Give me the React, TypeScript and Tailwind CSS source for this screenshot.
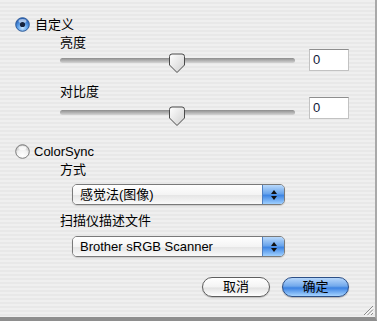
import React from "react";

const cjk = "font-['Liberation_Sans','Noto_Sans_CJK_SC',sans-serif]";

function Radio({ checked }: { checked: boolean }) {
  return (
    <svg width="15" height="15" viewBox="0 0 15 15" className="shrink-0">
      <defs>
        <radialGradient id="rb" cx="50%" cy="75%" r="65%">
          <stop offset="0%" stopColor="#c9e6ff" />
          <stop offset="55%" stopColor="#5a9ee8" />
          <stop offset="100%" stopColor="#2a63b8" />
        </radialGradient>
        <radialGradient id="rw" cx="50%" cy="80%" r="70%">
          <stop offset="0%" stopColor="#ffffff" />
          <stop offset="60%" stopColor="#f2f2f2" />
          <stop offset="100%" stopColor="#c4c4c4" />
        </radialGradient>
      </defs>
      <circle
        cx="7.5"
        cy="7.5"
        r="6.8"
        fill={checked ? "url(#rb)" : "url(#rw)"}
        stroke={checked ? "#2f5c9a" : "#7d7d7d"}
        strokeWidth="1"
      />
      <ellipse cx="7.5" cy="4" rx="4" ry="2" fill="#ffffff" opacity={checked ? 0.55 : 0.8} />
      {checked && <circle cx="7.5" cy="7.5" r="2.6" fill="#15233d" />}
    </svg>
  );
}

function Thumb() {
  return (
    <svg width="18" height="21" viewBox="0 0 18 21">
      <defs>
        <linearGradient id="tg" x1="0" y1="0" x2="1" y2="1">
          <stop offset="0%" stopColor="#ffffff" />
          <stop offset="100%" stopColor="#cfcfcf" />
        </linearGradient>
      </defs>
      <path
        d="M1.5 3.5 Q1.5 1 4 1 H14 Q16.5 1 16.5 3.5 V12 L9 19.5 L1.5 12 Z"
        fill="url(#tg)"
        stroke="#4a4a4a"
        strokeWidth="1"
      />
    </svg>
  );
}

function SliderRow({ trackTop, thumbTop }: { trackTop: string; thumbTop: string }) {
  return (
    <div className="flex items-start h-[22px]">
      <div className="relative w-[235px] h-[22px]">
        <div
          className={`${trackTop} h-[5px] rounded-full bg-[linear-gradient(#8c8c8c,#b8b8b8_60%,#d4d4d4)]`}
        />
        <div className={`absolute left-[108px] ${thumbTop}`}>
          <Thumb />
        </div>
      </div>
      <div className="ml-[14px] w-[40px] h-[22px] bg-white border border-[#c2c2c2] border-t-[#8e8e8e] pl-[3px] text-[13px] leading-[20px] text-[#101838]">
        0
      </div>
    </div>
  );
}

function Popup({ label }: { label: string }) {
  return (
    <div className="ml-[12px] flex w-[213px] h-[21px] rounded-[5px] border border-[#7a7a7a] overflow-hidden shadow-[0_1px_1px_rgba(0,0,0,0.15)]">
      <div className="flex-1 pl-[7px] text-[13px] leading-[19px] text-black bg-[linear-gradient(#ffffff,#f4f4f4_50%,#e6e6e6_55%,#fafafa)]">
        {label}
      </div>
      <div className="w-[22px] border-l border-[#4f7fc0] flex flex-col items-center justify-center gap-[2px] bg-[linear-gradient(#b9d9fb,#6aa5ec_45%,#3f86e4_55%,#9fd0ff)]">
        <svg width="6" height="4" viewBox="0 0 6 4">
          <path d="M3 0 L6 4 H0 Z" fill="#111" />
        </svg>
        <svg width="6" height="4" viewBox="0 0 6 4">
          <path d="M0 0 H6 L3 4 Z" fill="#111" />
        </svg>
      </div>
    </div>
  );
}

export default function App() {
  return (
    <div
      className={`relative w-[377px] h-[321px] overflow-hidden ${cjk} text-[13px] text-black border-r-2 border-r-[#a9a9a9] border-b-4 border-b-[#8e8e8e] bg-[repeating-linear-gradient(#efefef_0px,#efefef_2px,#e8e8e8_2px,#e8e8e8_4px)]`}
    >
      <div className="flex flex-col pt-[17px]">
        {/* 自定义 */}
        <div className="flex items-center h-[15px] pl-[15px] gap-[5px]">
          <Radio checked />
          <span className="leading-[15px]">自定义</span>
        </div>

        <div className="flex flex-col pl-[60px]">
          <div className="mt-[5px] leading-[12px] h-[12px]">亮度</div>
          <SliderRow trackTop="mt-[9px]" thumbTop="top-[4px]" />
          <div className="mt-[15px] leading-[11px] h-[11px]">对比度</div>
          <SliderRow trackTop="mt-[13px]" thumbTop="top-[9px]" />
        </div>

        {/* ColorSync */}
        <div className="mt-[25px] flex items-center h-[15px] pl-[15px] gap-[4px]">
          <Radio checked={false} />
          <span className="leading-[15px]">ColorSync</span>
        </div>

        <div className="flex flex-col pl-[60px]">
          <div className="mt-[5px] leading-[12px] h-[12px]">方式</div>
          <div className="mt-[8px]">
            <Popup label="感觉法(图像)" />
          </div>
          <div className="mt-[10px] leading-[12px] h-[12px]">扫描仪描述文件</div>
          <div className="mt-[9px]">
            <Popup label="Brother sRGB Scanner" />
          </div>
        </div>

        <div className="mt-[20px] flex justify-end gap-[12px] pr-[26px]">
          <button className="w-[68px] h-[20px] rounded-full border border-[#5e5e5e] text-[13px] leading-[18px] text-black bg-[linear-gradient(#ffffff,#f3f3f3_50%,#e2e2e2_55%,#ffffff)] shadow-[0_1px_1px_rgba(0,0,0,0.2)]">
            取消
          </button>
          <button className="w-[67px] h-[20px] rounded-full border border-[#2d4f86] text-[13px] leading-[18px] text-black bg-[linear-gradient(#b6d6fb,#72a9ec_45%,#3c82e2_55%,#a6d4ff)] shadow-[0_1px_1px_rgba(0,0,0,0.25)]">
            确定
          </button>
        </div>
      </div>

      {/* resize grip */}
      <svg
        className="absolute right-[1px] bottom-[1px]"
        width="11"
        height="11"
        viewBox="0 0 11 11"
      >
        <path d="M10 1 L1 10 M10 4.5 L4.5 10 M10 8 L8 10" stroke="#8a8a8a" strokeWidth="1" />
        <path d="M10.8 1.8 L1.8 10.8 M10.8 5.3 L5.3 10.8" stroke="#ffffff" strokeWidth="0.8" />
      </svg>
    </div>
  );
}
